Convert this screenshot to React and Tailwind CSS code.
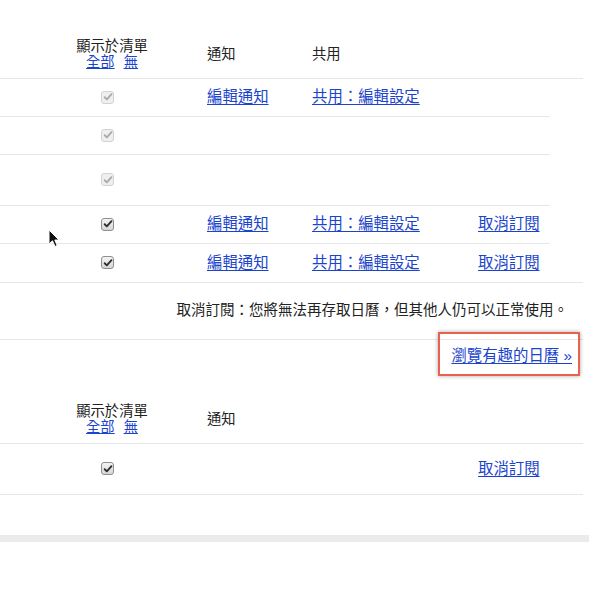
import React from 'react';
import clsx from 'clsx';

const font = "font-['Liberation_Sans','Noto_Sans_CJK_TC',sans-serif]";

function Check({ disabled }) {
  return (
    <span
      className={clsx(
        'flex h-[13px] w-[13px] items-center justify-center rounded-[3px] border',
        disabled
          ? 'border-[#d2d2d2] bg-[#efefef]'
          : 'border-[#8f8f8f] bg-gradient-to-b from-[#f4f4f4] to-[#d6d6d6]'
      )}
    >
      <svg viewBox="0 0 12 12" className="h-[10px] w-[10px]">
        <path
          d="M2 6.3 L4.6 8.8 L10.2 2.6"
          fill="none"
          stroke={disabled ? '#a9a9a9' : '#2e2e2e'}
          strokeWidth="2.2"
          strokeLinecap="round"
          strokeLinejoin="round"
        />
      </svg>
    </span>
  );
}

function Link({ children, className }) {
  return (
    <a href="#" className={clsx('text-[15.4px] leading-[18px] text-[#1b44cc] underline underline-offset-2', className)}>
      {children}
    </a>
  );
}

function HeaderRow({ share }) {
  return (
    <div className="flex w-[583px] items-center border-b border-[#e6e6e6] pb-[8px] text-[14.3px] leading-[16px] text-[#222]">
      <div className="w-[60px]" />
      <div className="flex w-[104px] flex-col items-center">
        <span>顯示於清單</span>
        <span className="flex gap-[9px]">
          <a href="#" className="text-[#1b44cc] underline">全部</a>
          <a href="#" className="text-[#1b44cc] underline">無</a>
        </span>
      </div>
      <div className="w-[148px] pl-[43px]">通知</div>
      {share && <div className="w-[166px]">共用</div>}
    </div>
  );
}

function Row({ disabled, notify, share, unsub, tall, wide, noBorder }) {
  return (
    <div
      className={clsx(
        'flex items-center pb-[1px]',
        tall ? 'h-[51px]' : 'h-[38px]',
        wide ? 'w-[583px]' : 'w-[550px]',
        !noBorder && 'border-b border-[#e6e6e6]'
      )}
    >
      <div className="w-[60px]" />
      <div className="w-[104px] pl-[41px]">
        <Check disabled={disabled} />
      </div>
      <div className="w-[148px] pl-[43px]">{notify && <Link>編輯通知</Link>}</div>
      <div className="w-[166px]">{share && <Link>共用：編輯設定</Link>}</div>
      <div className="w-[72px]">{unsub && <Link>取消訂閱</Link>}</div>
    </div>
  );
}

export default function App() {
  return (
    <div className={clsx('relative w-[589px] h-[611px] overflow-hidden bg-white pt-[38px]', font)}>
      <HeaderRow share />
      <Row disabled notify share />
      <Row disabled />
      <Row disabled tall />
      <Row notify share unsub />
      <Row notify share unsub noBorder />

      <div className="flex h-[58px] w-[583px] items-center justify-end border-b border-t border-[#e6e6e6] pr-[15px] text-[14.5px] text-[#222]">
        取消訂閱：您將無法再存取日曆，但其他人仍可以正常使用。
      </div>

      <div className="relative flex h-[32px] w-[583px] items-center justify-end pr-[11px]">
        <Link>瀏覽有趣的日曆 »</Link>
        <div className="absolute left-[438px] top-[-8px] h-[44px] w-[142px] border-2 border-[#e8624f] shadow-[0_0_4px_rgba(0,0,0,0.35)]" />
      </div>

      <div className="pt-[31px]">
        <HeaderRow />
        <Row tall wide unsub />
      </div>

      <div className="mt-[40px] h-[7px] w-full bg-[#ebebeb]" />

      <svg className="absolute left-[48px] top-[229px]" width="12" height="19" viewBox="0 0 12 19">
        <path d="M1 1 L1 15 L4.5 11.8 L7 17.5 L9.2 16.5 L6.8 11 L11 11 Z" fill="#111" stroke="#fff" strokeWidth="1" strokeLinejoin="round" />
      </svg>
    </div>
  );
}
